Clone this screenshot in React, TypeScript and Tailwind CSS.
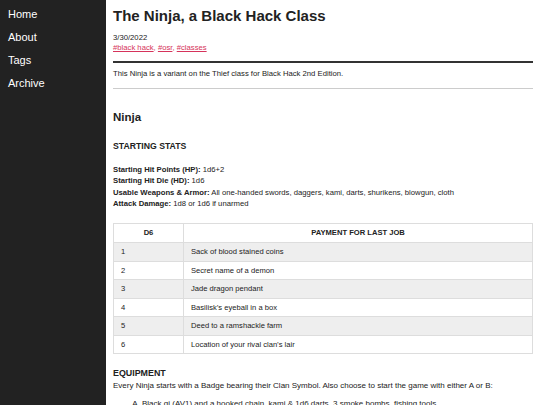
const rows = [
  "Sack of blood stained coins",
  "Secret name of a demon",
  "Jade dragon pendant",
  "Basilisk’s eyeball in a box",
  "Deed to a ramshackle farm",
  "Location of your rival clan’s lair",
];

const Sidebar = () => (
  <nav className="w-[106px] shrink-0 bg-[#222222] pt-[8px] pl-[8px] flex flex-col gap-[10px] text-[11px] leading-[13px] text-white">
    <a href="#">Home</a>
    <a href="#">About</a>
    <a href="#">Tags</a>
    <a href="#">Archive</a>
  </nav>
);

export default function App() {
  return (
    <div
      className="flex w-[540px] h-[405px] overflow-hidden bg-white text-[#222]"
      style={{ fontFamily: '"Liberation Sans", Arial, sans-serif' }}
    >
      <Sidebar />
      <main className="flex-1 pl-[7px] pr-[7px] pt-[7px]">
        <h1 className="text-[15px] font-bold leading-[18px]">The Ninja, a Black Hack Class</h1>
        <div className="mt-[8px] text-[7.7px] leading-[10px]">3/30/2022</div>
        <div className="text-[7.7px] leading-[10px] text-[#d6335b]">
          <a href="#" className="underline">#black hack</a>, <a href="#" className="underline">#osr</a>,{" "}
          <a href="#" className="underline">#classes</a>
        </div>
        <hr className="mt-[8px] border-t-2 border-[#333]" />
        <p className="mt-[5px] text-[7.7px] leading-[11px]">
          This Ninja is a variant on the Thief class for Black Hack 2nd Edition.
        </p>
        <hr className="mt-[9px] border-t border-[#ccc]" />

        <h2 className="mt-[21px] text-[11.5px] font-bold leading-[14px]">Ninja</h2>
        <h3 className="mt-[17px] text-[8.7px] font-bold leading-[11px]">STARTING STATS</h3>

        <div className="mt-[12px] text-[7.7px] leading-[11.3px]">
          <div>
            <b>Starting Hit Points (HP):</b> 1d6+2
          </div>
          <div>
            <b>Starting Hit Die (HD):</b> 1d6
          </div>
          <div>
            <b>Usable Weapons &amp; Armor:</b> All one-handed swords, daggers, kami, darts, shurikens, blowgun, cloth
          </div>
          <div>
            <b>Attack Damage:</b> 1d8 or 1d6 if unarmed
          </div>
        </div>

        <table className="mt-[14px] w-full border-collapse text-[7.6px]">
          <thead>
            <tr className="h-[19px]">
              <th className="w-[70px] border border-[#ddd] font-bold">D6</th>
              <th className="border border-[#ddd] font-bold">PAYMENT FOR LAST JOB</th>
            </tr>
          </thead>
          <tbody>
            {rows.map((r, i) => (
              <tr key={r} className={`h-[18.5px] ${i % 2 === 0 ? "bg-[#eeeeee]" : "bg-white"}`}>
                <td className="border border-[#ddd] px-[7px]">{i + 1}</td>
                <td className="border border-[#ddd] px-[7px]">{r}</td>
              </tr>
            ))}
          </tbody>
        </table>

        <h3 className="mt-[14px] text-[8.9px] font-bold leading-[11px]">EQUIPMENT</h3>
        <p className="mt-[1px] text-[8px] leading-[11px]">
          Every Ninja starts with a Badge bearing their Clan Symbol. Also choose to start the game with either A or B:
        </p>
        <ol className="mt-[7px] pl-[29px] list-[upper-alpha] text-[8px] leading-[11px]">
          <li>Black gi (AV1) and a hooked chain, kami &amp; 1d6 darts, 3 smoke bombs, fishing tools</li>
        </ol>
      </main>
    </div>
  );
}
